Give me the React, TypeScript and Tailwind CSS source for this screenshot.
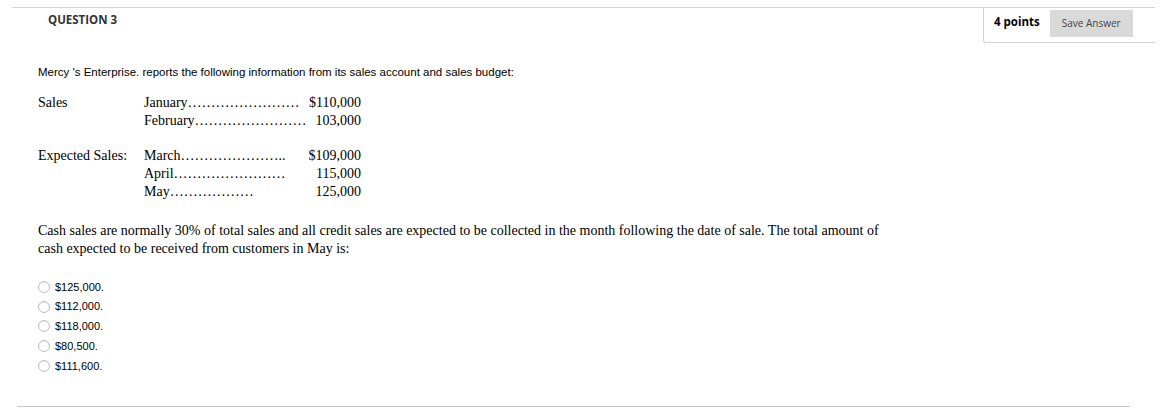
const sales = [
  { m: "January", dots: "……………………", v: "$110,000" },
  { m: "February", dots: "……………………", v: "103,000" },
];
const expected = [
  { m: "March", dots: "…………………..", v: "$109,000" },
  { m: "April", dots: "……………………", v: "115,000" },
  { m: "May", dots: "………………", v: "125,000" },
];
const options = ["$125,000.", "$112,000.", "$118,000.", "$80,500.", "$111,600."];

function Group({ label, rows, top }: { label: string; rows: { m: string; dots: string; v: string }[]; top?: string }) {
  return (
    <div className={`flex ${top ?? ""}`}>
      <div className="w-[106px]">{label}</div>
      <div className="w-[217px]">
        {rows.map((r) => (
          <div key={r.m} className="flex justify-between whitespace-nowrap">
            <span>
              {r.m}
              {r.dots}
            </span>
            <span>{r.v}</span>
          </div>
        ))}
      </div>
    </div>
  );
}

export default function App() {
  return (
    <div className="w-[1167px] h-[411px] bg-white overflow-hidden pt-[7px]">
      {/* header */}
      <div className="ml-[12px] w-[1143px] border-t border-[#d4d4d4] flex items-start justify-between" style={{ fontFamily: '"Open Sans", sans-serif' }}>
        <div className="pl-[36px] pt-[3px] text-[11.5px] font-bold text-[#333]">QUESTION 3</div>
        <div className="h-[35px] w-[172px] border-l border-b border-[#d4d4d4] rounded-bl-[3px] flex items-start pt-[2px] pl-[10px] gap-[10px]">
          <span className="mt-[5px] text-[11.5px] leading-[14px] font-bold text-black">4 points</span>
          <button className="h-[27px] w-[83px] bg-[#d9d9d9] text-[10px] text-[#444]">Save Answer</button>
        </div>
      </div>

      <div className="pl-[38px]">
        <p className="mt-[22px] text-[11.5px] leading-[14px] text-black" style={{ fontFamily: '"Liberation Sans", Arial, sans-serif' }}>
          Mercy 's Enterprise. reports the following information from its sales account and sales budget:
        </p>

        <div className="mt-[15px] text-[14px] leading-[18px] text-black" style={{ fontFamily: '"Liberation Serif", "Times New Roman", serif' }}>
          <Group label="Sales" rows={sales} />
          <Group label="Expected Sales:" rows={expected} top="mt-[17px]" />

          <p className="mt-[21px] w-[880px]">
            Cash sales are normally 30% of total sales and all credit sales are expected to be collected in the month following the date of sale. The total amount of
            <br />
            cash expected to be received from customers in May is:
          </p>
        </div>

        <div className="mt-[19px] flex flex-col" style={{ fontFamily: '"Liberation Sans", Arial, sans-serif' }}>
          {options.map((o) => (
            <label key={o} className="flex items-center gap-[5px] h-[19.75px] text-[11px] text-black">
              <span className="w-[12px] h-[12px] rounded-full border border-[#bdbdbd] bg-white shadow-[inset_0_1px_1px_rgba(0,0,0,0.08)]" />
              {o}
            </label>
          ))}
        </div>
      </div>

      <div className="ml-[17px] mt-[30px] w-[1113px] border-t border-[#c8c8c8]" />
    </div>
  );
}
